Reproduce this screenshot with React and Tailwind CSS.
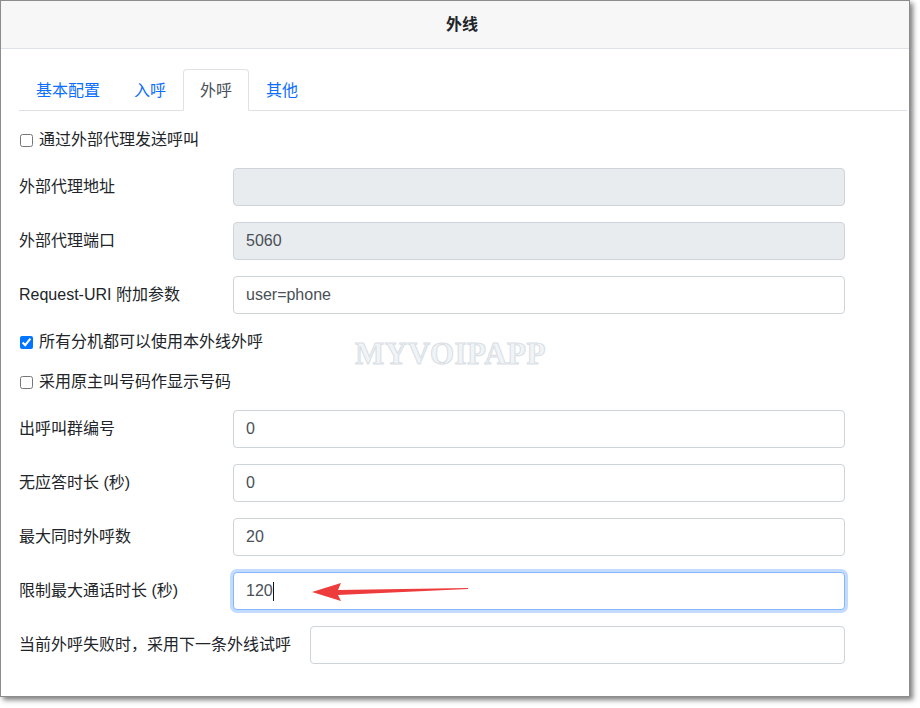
import React from 'react';

const font = { fontFamily: '"Liberation Sans", "Noto Sans CJK SC", sans-serif' };

const tabs = ['基本配置', '入呼', '外呼', '其他'];

const Field = ({ label, value = '', disabled, focused }) => (
  <div className="flex items-center h-[38px]">
    <label className="min-w-[214px] pr-[19px] text-[16px] leading-6 text-[#212529] whitespace-nowrap">{label}</label>
    {focused ? (
      <div className="relative flex-1 h-[38px] flex items-center px-3 rounded-[4px] border border-[#86b7fe] bg-white text-[16px] text-[#495057] shadow-[0_0_0_3px_rgba(13,110,253,0.25)]">
        <span>{value}</span>
        <span className="inline-block w-px h-[19px] bg-[#111]"></span>
        <svg className="absolute left-[78px] top-[10px]" width="160" height="18" viewBox="0 0 160 18">
          <polygon points="0,9 29,0 26,7 156,5 156,6 26,12 29,18" fill="#ee3b3b" />
        </svg>
      </div>
    ) : (
      <input
        readOnly
        value={value}
        disabled={disabled}
        className={`flex-1 h-[38px] px-3 rounded-[4px] border border-[#ced4da] text-[16px] text-[#495057] outline-none ${disabled ? 'bg-[#e9ecef]' : 'bg-white'}`}
      />
    )}
  </div>
);

const Check = ({ label, checked }) => (
  <label className="flex items-center h-6 text-[16px] text-[#212529]">
    <input type="checkbox" readOnly checked={checked} className="w-[13px] h-[13px] ml-px mr-[6px] accent-[#0075ff]" />
    {label}
  </label>
);

export default function App() {
  return (
    <div className="w-[920px] h-[708px] bg-white" style={font}>
      <div className="relative w-[910px] h-[697px] bg-white border border-[#8c8c8c] shadow-[3px_3px_5px_rgba(0,0,0,0.5)]">
        <div className="h-[48px] bg-[#f7f7f7] border-b border-[#dee2e6] flex items-center justify-center pl-[14px]">
          <span className="text-[16px] font-bold text-[#212529]">外线</span>
        </div>

        <div className="pl-[18px] pr-[2px] pt-5">
          <div className="flex border-b border-[#dee2e6]">
            {tabs.map((t) => (
              <div
                key={t}
                className={
                  t === '外呼'
                    ? 'px-4 pt-[9px] pb-[7px] -mb-px text-[16px] leading-[23px] text-[#495057] bg-white border border-[#dee2e6] border-b-white rounded-t-[4px]'
                    : 'px-4 pt-[9px] pb-[7px] text-[16px] leading-[23px] text-[#0d6efd] border border-transparent'
                }
              >
                {t}
              </div>
            ))}
          </div>

          <div className="w-[826px] pt-[17px] flex flex-col gap-4">
            <Check label="通过外部代理发送呼叫" />
            <Field label="外部代理地址" disabled />
            <Field label="外部代理端口" value="5060" disabled />
            <Field label="Request-URI 附加参数" value="user=phone" />
            <Check label="所有分机都可以使用本外线外呼" checked />
            <Check label="采用原主叫号码作显示号码" />
            <Field label="出呼叫群编号" value="0" />
            <Field label="无应答时长 (秒)" value="0" />
            <Field label="最大同时外呼数" value="20" />
            <Field label="限制最大通话时长 (秒)" value="120" focused />
            <Field label="当前外呼失败时，采用下一条外线试呼" />
          </div>
        </div>

        <div
          className="absolute left-[354px] top-[330px] text-[31px] font-bold tracking-[0.5px] text-[#f1f4f7] select-none"
          style={{ fontFamily: '"Liberation Serif", serif', WebkitTextStroke: '1px #d9dee4' }}
        >
          MYVOIPAPP
        </div>
      </div>
    </div>
  );
}
